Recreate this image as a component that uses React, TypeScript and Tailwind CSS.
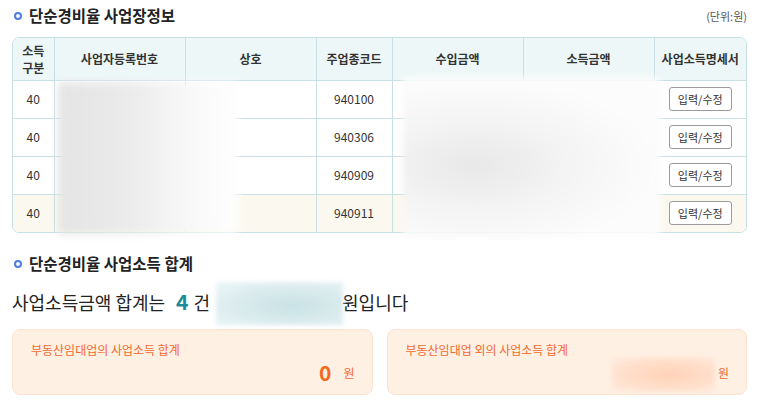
import React from 'react';

const rows = [
  { type: '40', code: '940100' },
  { type: '40', code: '940306' },
  { type: '40', code: '940909' },
  { type: '40', code: '940911' },
];

function Bullet() {
  return <span className="inline-block w-[8px] h-[8px] rounded-full border-[2px] border-[#4d7fe6] mr-[7px]" />;
}

export default function App() {
  return (
    <div className="relative w-[773px] h-[403px] bg-white pl-3 pr-[26px] pt-[6px] text-[#333] font-['Noto_Sans_CJK_KR','Noto_Sans',sans-serif] overflow-hidden">
      {/* 사업장정보 */}
      <div className="flex items-center justify-between h-[20px]">
        <h2 className="flex items-center text-[15.5px] font-bold text-[#222] pl-[2px]">
          <Bullet />
          단순경비율 사업장정보
        </h2>
        <span className="text-[11px] text-[#555]">(단위:원)</span>
      </div>

      <div className="relative mt-[11px] border border-[#c6e0e4] rounded-[7px] overflow-hidden">
        <table className="w-full table-fixed border-collapse text-[12px]">
          <colgroup>
            <col className="w-[41px]" />
            <col className="w-[131px]" />
            <col className="w-[131px]" />
            <col className="w-[76px]" />
            <col className="w-[131px]" />
            <col className="w-[131px]" />
            <col />
          </colgroup>
          <thead>
            <tr className="h-[42px] bg-[#eef7f7] text-[#333]">
              <th className="border-r border-b border-[#c6e0e4] leading-[17px] font-bold">소득<br />구분</th>
              <th className="border-r border-b border-[#c6e0e4] font-bold">사업자등록번호</th>
              <th className="border-r border-b border-[#c6e0e4] font-bold">상호</th>
              <th className="border-r border-b border-[#c6e0e4] font-bold">주업종코드</th>
              <th className="border-r border-b border-[#c6e0e4] font-bold">수입금액</th>
              <th className="border-r border-b border-[#c6e0e4] font-bold">소득금액</th>
              <th className="border-b border-[#c6e0e4] font-bold">사업소득명세서</th>
            </tr>
          </thead>
          <tbody>
            {rows.map((r, i) => (
              <tr key={i} className={`h-[38px] ${i === rows.length - 1 ? 'bg-[#fbf9ef]' : 'bg-white'}`}>
                <td className={`text-center border-r border-[#c6e0e4] ${i < rows.length - 1 ? 'border-b' : ''}`}>{r.type}</td>
                <td className={`border-r border-[#c6e0e4] ${i < rows.length - 1 ? 'border-b' : ''}`}></td>
                <td className={`border-r border-[#c6e0e4] ${i < rows.length - 1 ? 'border-b' : ''}`}></td>
                <td className={`text-center border-r border-[#c6e0e4] ${i < rows.length - 1 ? 'border-b' : ''}`}>{r.code}</td>
                <td className={`border-r border-[#c6e0e4] ${i < rows.length - 1 ? 'border-b' : ''}`}></td>
                <td className={`border-r border-[#c6e0e4] ${i < rows.length - 1 ? 'border-b' : ''}`}></td>
                <td className={`text-center border-[#c6e0e4] ${i < rows.length - 1 ? 'border-b' : ''}`}>
                  <button className="h-[24px] px-[8px] border border-[#9a9a9a] rounded-[3px] bg-white text-[11px] text-[#333]">입력/수정</button>
                </td>
              </tr>
            ))}
          </tbody>
        </table>
      </div>

      {/* 합계 */}
      <h2 className="mt-[21px] flex items-center h-[20px] text-[15.5px] font-bold text-[#222] pl-[2px]">
        <Bullet />
        단순경비율 사업소득 합계
      </h2>

      <p className="mt-[14px] h-[28px] flex items-center text-[18px] text-[#222]">
        사업소득금액 합계는
        <span className="ml-[11px] text-[21px] font-bold text-[#1b8c9a]">4</span>
        <span className="ml-[5px]">건</span>
        <span className="w-[132px]" />
        원입니다
      </p>

      <div className="mt-[13px] grid grid-cols-2 gap-[14px]">
        <div className="h-[66px] bg-[#fff0e4] border border-[#fde3cf] rounded-[8px] pl-[18px] pr-[17px] pt-[11px]">
          <div className="text-[12px] text-[#f2692e] leading-[18px]">부동산임대업의 사업소득 합계</div>
          <div className="flex items-center justify-end h-[28px]">
            <span className="text-[21px] font-bold text-[#f46a1c]">0</span>
            <span className="ml-[12px] text-[12px] text-[#f2692e]">원</span>
          </div>
        </div>
        <div className="h-[66px] bg-[#fff0e4] border border-[#fde3cf] rounded-[8px] pl-[18px] pr-[17px] pt-[11px]">
          <div className="text-[12px] text-[#f2692e] leading-[18px]">부동산임대업 외의 사업소득 합계</div>
          <div className="flex items-center justify-end h-[28px]">
            <span className="ml-[5px] text-[12px] text-[#f2692e]">원</span>
          </div>
        </div>
      </div>

      {/* blurred (masked) values */}
      <div className="absolute left-[58px] top-[82px] w-[180px] h-[152px] bg-[linear-gradient(90deg,#e4e4e4_0%,#ebebeb_40%,#f7f7f7_70%,#ffffff_100%)] blur-[4px]" />
      <div className="absolute left-[403px] top-[77px] w-[257px] h-[160px] bg-[radial-gradient(ellipse_at_28%_55%,#e8e8e8_0%,#f5f5f5_40%,#fcfcfc_70%),radial-gradient(ellipse_at_75%_50%,#eeeeee_0%,#fbfbfb_60%)] bg-[#f8f8f8] blur-[3px]" />
      <div className="absolute left-[216px] top-[282px] w-[127px] h-[43px] bg-[radial-gradient(ellipse_at_60%_55%,#c9e2e6_0%,#dcecee_55%,#eef6f7_100%)] blur-[2px]" />
      <div className="absolute left-[612px] top-[357px] w-[103px] h-[35px] bg-[radial-gradient(ellipse_at_55%_50%,#ffd2b8_0%,#ffdfcb_55%,#ffece0_100%)] blur-[2px]" />
    </div>
  );
}
